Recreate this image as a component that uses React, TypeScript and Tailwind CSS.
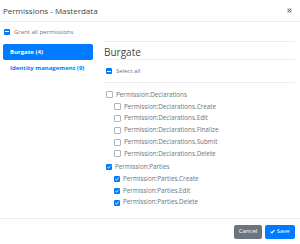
import React from 'react';

type CheckState = 'checked' | 'unchecked' | 'partial';

const Box: React.FC<{ state: CheckState }> = ({ state }) => {
  if (state === 'unchecked') {
    return <span className="w-[5px] h-[5px] rounded-[1px] border border-[#adb5bd] bg-white flex-shrink-0 box-content" />;
  }
  return (
    <span className="w-[6px] h-[6px] rounded-[1px] bg-[#007bff] flex items-center justify-center flex-shrink-0">
      {state === 'checked' ? (
        <svg width="6" height="6" viewBox="0 0 6 6">
          <path d="M1.3 3.1 L2.5 4.2 L4.7 1.6" fill="none" stroke="white" strokeWidth="0.9" />
        </svg>
      ) : (
        <span className="w-[4px] h-[1px] bg-white" />
      )}
    </span>
  );
};

const Row: React.FC<{ label: string; state: CheckState; indent?: boolean }> = ({ label, state, indent }) => (
  <div className={`flex items-center gap-[3px] h-[11.8px] ${indent ? 'pl-[8px]' : ''}`}>
    <Box state={state} />
    <span className="text-[6.3px] leading-none text-[#6c757d]">{label}</span>
  </div>
);

const declarations = ['Create', 'Edit', 'Finalize', 'Submit', 'Delete'];
const parties = ['Create', 'Edit', 'Delete'];

export default function App() {
  return (
    <div className="w-[300px] h-[244px] bg-white flex flex-col" style={{ fontFamily: '"Open Sans", sans-serif' }}>
      {/* Header */}
      <div className="h-[22px] flex items-center justify-between pl-[3px] pr-[8px] border-b border-[#eeeeee]">
        <span className="text-[8px] text-[#444]">Permissions - Masterdata</span>
        <svg width="5" height="5" viewBox="0 0 5 5">
          <rect x="0" y="0" width="5" height="5" fill="#d8d8d8" />
          <path d="M1 1 L4 4 M4 1 L1 4" stroke="#666" strokeWidth="0.9" />
        </svg>
      </div>

      {/* Body */}
      <div className="flex-1 flex flex-col">
        <div className="flex items-center gap-[4px] pl-[4px] h-[19px]">
          <Box state="partial" />
          <span className="text-[6px] leading-none text-[#6c757d]">Grant all permissions</span>
        </div>

        <div className="flex flex-1">
          {/* Nav */}
          <div className="w-[90px] ml-[3px] pt-[3px] flex flex-col">
            <div className="h-[16px] rounded-[2px] bg-[#007bff] flex items-center pl-[7px]">
              <span className="text-[6px] font-bold text-white">Burgate (4)</span>
            </div>
            <div className="h-[16px] flex items-center pl-[7px]">
              <span className="text-[6px] font-bold text-[#007bff]">Identity management (9)</span>
            </div>
          </div>

          {/* Permissions */}
          <div className="ml-[11px] w-[191px] border-t border-[#eeeeee] flex flex-col">
            <div className="h-[18px] flex items-center pt-[2px] border-b border-[#eeeeee]">
              <span className="text-[10px] font-medium text-[#444] leading-[14px]">Burgate</span>
            </div>
            <div className="h-[23px] flex items-center pl-[2px] border-b border-[#eeeeee]">
              <Box state="partial" />
              <span className="ml-[4px] text-[6px] leading-none text-[#6c757d]">Select all</span>
            </div>
            <div className="pt-[6px] pl-[2px] flex flex-col">
              <Row label="Permission:Declarations" state="unchecked" />
              {declarations.map((d) => (
                <Row key={d} label={`Permission:Declarations.${d}`} state="unchecked" indent />
              ))}
              <div className="h-[1.5px]" />
              <Row label="Permission:Parties" state="checked" />
              {parties.map((p) => (
                <Row key={p} label={`Permission:Parties.${p}`} state="checked" indent />
              ))}
            </div>
          </div>
        </div>
      </div>

      {/* Footer */}
      <div className="h-[26px] border-t border-[#eeeeee] flex items-center justify-end gap-[3px] pr-[5px]">
        <button className="h-[14px] w-[28px] rounded-[2px] bg-[#6c757d] text-white text-[6px]">Cancel</button>
        <button className="h-[14px] w-[30px] rounded-[2px] bg-[#007bff] text-white text-[6px] flex items-center justify-center gap-[1.5px]">
          <svg width="5" height="5" viewBox="0 0 5 5">
            <path d="M0.6 2.6 L1.9 3.9 L4.4 1.1" fill="none" stroke="white" strokeWidth="1.1" />
          </svg>
          Save
        </button>
      </div>
    </div>
  );
}
